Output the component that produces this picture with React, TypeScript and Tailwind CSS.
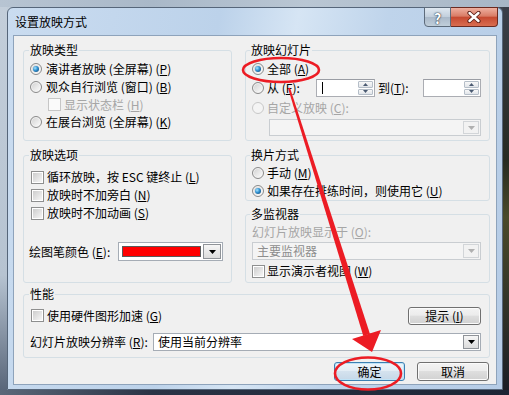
import React from "react";

const FONT = "font-['Noto_Sans_CJK_SC','Noto_Sans',sans-serif]";

function Radio({ checked = false, disabled = false }: { checked?: boolean; disabled?: boolean }) {
  return (
    <span
      className={
        disabled
          ? "flex h-[12px] w-[12px] shrink-0 items-center justify-center rounded-full border border-[#c8c8c8] bg-[#f4f4f4]"
          : "flex h-[12px] w-[12px] shrink-0 items-center justify-center rounded-full border border-[#8a8a8a] bg-[linear-gradient(135deg,#cfcfcf,#ffffff)] shadow-[inset_0_0_0_1px_#f4f4f4]"
      }
    >
      {checked ? (
        <span className="h-[6px] w-[6px] rounded-full bg-[radial-gradient(circle_at_35%_35%,#a6e4ff_0%,#2f8fcf_45%,#0b3a63_100%)]" />
      ) : null}
    </span>
  );
}

function Check({ disabled = false }: { disabled?: boolean }) {
  return (
    <span
      className={
        disabled
          ? "flex h-[13px] w-[13px] shrink-0 items-center justify-center border border-[#c6c6c6] bg-[#fafafa]"
          : "flex h-[13px] w-[13px] shrink-0 items-center justify-center border border-[#8e8f8f] bg-white"
      }
    >
      {disabled ? null : <span className="h-[9px] w-[9px] bg-[linear-gradient(135deg,#cdcdcd,#f6f6f6)]" />}
    </span>
  );
}

function Lbl({ t, k, s = "", disabled = false }: { t: string; k: string; s?: string; disabled?: boolean }) {
  return (
    <span className={disabled ? "whitespace-nowrap text-[#a6a6a6]" : "whitespace-nowrap text-black"}>
      {t}(<span className="underline">{k}</span>){s}
    </span>
  );
}

function Tri({ color, w = 7, h = 4 }: { color: string; w?: number; h?: number }) {
  return (
    <svg width={w} height={h} viewBox={`0 0 ${w} ${h}`}>
      <path d={`M0 0H${w}L${w / 2} ${h}Z`} fill={color} />
    </svg>
  );
}

function Spin({ w, caret = false }: { w: string; caret?: boolean }) {
  return (
    <div className={`flex h-[18px] shrink-0 border border-[#abadb3] border-t-[#9a9da4] bg-white p-[1px] ${w}`}>
      <div className="flex flex-1 items-center pl-[4px]">
        {caret ? <span className="h-[12px] w-px bg-black" /> : null}
      </div>
      <div className="flex w-[15px] flex-col gap-px">
        <span className="flex flex-1 items-center justify-center rounded-[1px] border border-[#b5bec8] bg-[linear-gradient(#f8f8f8,#e1e5ea)]">
          <svg width="5" height="3" viewBox="0 0 5 3">
            <path d="M0 3H5L2.5 0Z" fill="#4b5b72" />
          </svg>
        </span>
        <span className="flex flex-1 items-center justify-center rounded-[1px] border border-[#b5bec8] bg-[linear-gradient(#f8f8f8,#e1e5ea)]">
          <svg width="5" height="3" viewBox="0 0 5 3">
            <path d="M0 0H5L2.5 3Z" fill="#4b5b72" />
          </svg>
        </span>
      </div>
    </div>
  );
}

function DropBtn({ disabled = false }: { disabled?: boolean }) {
  return (
    <span
      className={
        disabled
          ? "flex w-[16px] shrink-0 items-center justify-center border border-[#d2d5d8] bg-[#f2f2f2]"
          : "flex w-[16px] shrink-0 items-center justify-center border border-[#8f9398] bg-[linear-gradient(#f6f6f6,#dcdcdc)]"
      }
    >
      <Tri color={disabled ? "#b0b0b0" : "#000000"} />
    </span>
  );
}

function Btn({ children, w, def = false }: { children: React.ReactNode; w: string; def?: boolean }) {
  return (
    <div
      className={
        def
          ? `flex h-[19px] shrink-0 items-center justify-center rounded-[3px] border border-[#3c7fb1] bg-[linear-gradient(#eef5fa_0%,#e3edf5_45%,#d4e2ee_50%,#c6d8e8_100%)] shadow-[inset_0_0_0_1px_#bfe3f7] ${w}`
          : `flex h-[19px] shrink-0 items-center justify-center rounded-[3px] border border-[#707070] bg-[linear-gradient(#f3f3f3_0%,#ececec_45%,#dedede_50%,#d1d1d1_100%)] shadow-[inset_0_0_0_1px_#fbfbfb] ${w}`
      }
    >
      {children}
    </div>
  );
}

function Group({ title, h, left = true, children }: { title: string; h: string; left?: boolean; children: React.ReactNode }) {
  return (
    <fieldset
      className={`min-w-0 rounded-[3px] border border-[#d5dfe5] ${left ? "pl-[5px]" : "pl-[4px]"} ${h}`}
    >
      <legend className="px-[1px] text-[12px] leading-[14px] text-black">{title}</legend>
      {children}
    </fieldset>
  );
}

export default function App() {
  return (
    <div className={`relative flex h-[395px] w-[509px] flex-col overflow-hidden bg-[#1c2230] text-[12px] leading-[14px] ${FONT}`}>
      {/* background strip at top */}
      <div className="h-[7px] shrink-0 bg-[linear-gradient(90deg,#b7c4d2,#a9b8c8_30%,#b9c6d3_60%,#a7b6c6)]" />
      <div className="flex h-[383px] shrink-0 bg-[linear-gradient(90deg,#c0ccd8_0%,#b2c0cf_50%,#3b414d_100%)]">
        <div className="w-[7px] shrink-0 bg-[linear-gradient(#c3ceda,#b6c3d1_70%,#59667a)]" />
        {/* window */}
        <div className="flex h-[383px] w-[496px] shrink-0 flex-col rounded-t-[6px] border border-[#56667a] bg-[linear-gradient(100deg,#cadcf0_0%,#bcd2ea_38%,#d6e5f4_52%,#bfd4eb_68%,#b6cce6_100%)]">
          {/* title bar */}
          <div className="flex h-[27px] shrink-0 items-start justify-between">
            <span className="pl-[7px] pt-[7px] text-[12px] leading-[14px] text-black">设置放映方式</span>
            <div className="-mt-px mr-[4px] flex">
              <div className="flex h-[20px] w-[27px] items-center justify-center rounded-bl-[4px] border border-[#5d6b7b] bg-[linear-gradient(#dfe8f1,#c2cfdc_48%,#aab9c9_52%,#c0ceda)] pt-px text-[14px] font-bold leading-[14px] text-white [text-shadow:0_0_2px_#24313f,0_0_1px_#24313f]">
                ?
              </div>
              <div className="flex h-[20px] w-[47px] items-center justify-center rounded-br-[4px] border border-l-0 border-[#6b2a20] bg-[linear-gradient(#eeb0a0,#d97c66_45%,#c64a31_52%,#d96d50)]">
                <svg width="14" height="12" viewBox="0 0 14 12">
                  <path d="M2.5 2L11.5 10M11.5 2L2.5 10" stroke="#5a1d14" strokeWidth="4.2" strokeLinecap="round" />
                  <path d="M2.5 2L11.5 10M11.5 2L2.5 10" stroke="#ffffff" strokeWidth="2.4" strokeLinecap="round" />
                </svg>
              </div>
            </div>
          </div>
          {/* client area */}
          <div className="mx-[5px] flex h-[350px] shrink-0 flex-col border border-[#8ea3bb] bg-[#f0f0f0] pl-[9px] pr-[6px] pt-[7px]">
            <div className="flex gap-[13px]">
              {/* left column */}
              <div className="flex w-[209px] shrink-0 flex-col">
                <Group title="放映类型" h="h-[98px]">
                  <div className="flex flex-col pt-[3px]">
                    <div className="flex h-[18px] items-center gap-[4px] pl-[1px]">
                      <Radio checked />
                      <Lbl t="演讲者放映 (全屏幕) " k="P" />
                    </div>
                    <div className="flex h-[18px] items-center gap-[4px] pl-[1px]">
                      <Radio />
                      <Lbl t="观众自行浏览 (窗口) " k="B" />
                    </div>
                    <div className="flex h-[17px] items-center gap-[3px] pl-[19px]">
                      <Check disabled />
                      <Lbl t="显示状态栏 " k="H" disabled />
                    </div>
                    <div className="flex h-[17px] items-center gap-[4px] pl-[1px]">
                      <Radio />
                      <Lbl t="在展台浏览 (全屏幕) " k="K" />
                    </div>
                  </div>
                </Group>
                <div className="mt-[7px]">
                  <Group title="放映选项" h="h-[135px]">
                    <div className="flex flex-col pt-[6px]">
                      <div className="flex h-[18px] items-center gap-[3px] pl-[2px]">
                        <Check />
                        <Lbl t="循环放映，按 ESC 键终止 " k="L" />
                      </div>
                      <div className="flex h-[18px] items-center gap-[3px] pl-[2px]">
                        <Check />
                        <Lbl t="放映时不加旁白 " k="N" />
                      </div>
                      <div className="flex h-[18px] items-center gap-[3px] pl-[2px]">
                        <Check />
                        <Lbl t="放映时不加动画 " k="S" />
                      </div>
                      <div className="mt-[20px] flex h-[19px] items-center">
                        <span className="w-[89px] shrink-0">
                          <Lbl t="绘图笔颜色 " k="E" s=":" />
                        </span>
                        <div className="flex h-[19px] w-[105px] shrink-0 border border-[#a5acb5] bg-white p-[1px]">
                          <div className="flex flex-1 items-center px-[2px]">
                            <span className="h-[11px] flex-1 border border-[#5a5a5a] bg-[#ff0000]" />
                          </div>
                          <span className="flex w-[18px] shrink-0 items-center justify-center border border-[#8f9398] bg-[linear-gradient(#f6f6f6,#dcdcdc)]">
                            <Tri color="#000000" />
                          </span>
                        </div>
                      </div>
                    </div>
                  </Group>
                </div>
              </div>
              {/* right column */}
              <div className="flex w-[245px] shrink-0 flex-col">
                <Group title="放映幻灯片" h="h-[98px]" left={false}>
                  <div className="flex flex-col pt-[3px]">
                    <div className="flex h-[18px] items-center gap-[3px] pl-[2px]">
                      <Radio checked />
                      <Lbl t="全部 " k="A" />
                    </div>
                    <div className="flex h-[20px] items-center pl-[2px]">
                      <Radio />
                      <span className="ml-[3px] w-[49px] shrink-0">
                        <Lbl t="从 " k="F" s=":" />
                      </span>
                      <Spin w="w-[59px]" caret />
                      <span className="w-[48px] shrink-0 pl-[3px]">
                        <Lbl t="到" k="T" s=":" />
                      </span>
                      <Spin w="w-[58px]" />
                    </div>
                    <div className="flex h-[20px] items-center gap-[3px] pl-[2px]">
                      <Radio disabled />
                      <Lbl t="自定义放映 " k="C" s=":" disabled />
                    </div>
                    <div className="ml-[19px] mt-[1px] flex h-[17px] w-[212px] border border-[#c9cdd1] bg-[#f4f4f4] p-[1px]">
                      <div className="flex-1" />
                      <DropBtn disabled />
                    </div>
                  </div>
                </Group>
                <div className="mt-[7px]">
                  <Group title="换片方式" h="h-[53px]" left={false}>
                    <div className="flex flex-col pt-[2px]">
                      <div className="flex h-[18px] items-center gap-[3px] pl-[2px]">
                        <Radio />
                        <Lbl t="手动 " k="M" />
                      </div>
                      <div className="flex h-[18px] items-center gap-[3px] pl-[2px]">
                        <Radio checked />
                        <Lbl t="如果存在排练时间，则使用它 " k="U" />
                      </div>
                    </div>
                  </Group>
                </div>
                <div className="mt-[6px]">
                  <Group title="多监视器" h="h-[76px]" left={false}>
                    <div className="flex flex-col pt-[2px]">
                      <div className="flex h-[18px] items-center pl-[2px]">
                        <Lbl t="幻灯片放映显示于 " k="O" s=":" disabled />
                      </div>
                      <div className="ml-[2px] mt-[1px] flex h-[18px] w-[229px] border border-[#c9cdd1] bg-[#f4f4f4] p-[1px]">
                        <div className="flex flex-1 items-center pl-[3px] text-[#8d8d8d]">主要监视器</div>
                        <DropBtn disabled />
                      </div>
                      <div className="mt-[2px] flex h-[18px] items-center gap-[2px] pl-[2px]">
                        <Check />
                        <Lbl t="显示演示者视图 " k="W" />
                      </div>
                    </div>
                  </Group>
                </div>
              </div>
            </div>
            {/* performance */}
            <div className="mt-[4px]">
              <fieldset className="h-[71px] min-w-0 rounded-[3px] border border-[#d5dfe5] pl-[5px] pr-[8px]">
                <legend className="px-[1px] text-[12px] leading-[14px] text-black">性能</legend>
                <div className="flex flex-col pt-[5px]">
                  <div className="flex h-[19px] items-center justify-between">
                    <div className="flex items-center gap-[3px] pl-[2px]">
                      <Check />
                      <Lbl t="使用硬件图形加速 " k="G" />
                    </div>
                    <div className="flex h-[18px] w-[73px] items-center justify-center rounded-[3px] border border-[#707070] bg-[linear-gradient(#f3f3f3_0%,#ececec_45%,#dedede_50%,#d1d1d1_100%)] shadow-[inset_0_0_0_1px_#fbfbfb]">
                      <Lbl t="提示 " k="I" />
                    </div>
                  </div>
                  <div className="mt-[8px] flex h-[18px] items-center">
                    <span className="w-[124px] shrink-0 pl-px">
                      <Lbl t="幻灯片放映分辨率 " k="R" s=":" />
                    </span>
                    <div className="flex h-[18px] flex-1 border border-[#a5acb5] bg-white p-[1px]">
                      <div className="flex flex-1 items-center pl-[3px]">使用当前分辨率</div>
                      <DropBtn />
                    </div>
                  </div>
                </div>
              </fieldset>
            </div>
            {/* buttons */}
            <div className="mt-[4px] flex justify-end gap-[12px] pr-[1px]">
              <Btn w="w-[71px]" def>
                确定
              </Btn>
              <Btn w="w-[72px]">取消</Btn>
            </div>
          </div>
        </div>
        <div className="flex-1 bg-[linear-gradient(#3a3f4a,#272b22_40%,#4a4a2a_55%,#1b1e26)]" />
      </div>
      <div className="flex-1 bg-[linear-gradient(90deg,#5b6879,#2a3345_30%,#1d2535)]" />

      {/* red annotations */}
      <svg className="pointer-events-none absolute left-0 top-0" width="509" height="395" viewBox="0 0 509 395">
        <ellipse cx="281" cy="70" rx="38" ry="12" fill="none" stroke="#ec1c24" strokeWidth="2.6" />
        <polygon points="288,88.3 290,87.7 369.9,333.8 363.3,335.9" fill="#ec1c24" />
        <polygon points="352,339 381,330 372,352" fill="#ec1c24" />
        <ellipse cx="368" cy="373.5" rx="33" ry="16" fill="none" stroke="#ec1c24" strokeWidth="2.6" />
      </svg>
    </div>
  );
}
